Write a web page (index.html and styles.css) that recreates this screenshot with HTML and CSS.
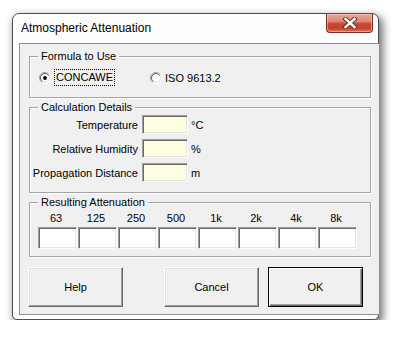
FILE: index.html
```html
<!DOCTYPE html>
<html>
<head>
<meta charset="utf-8">
<link rel="stylesheet" href="styles.css">
</head>
<body>
<svg class="defs" width="0" height="0">
  <defs>
    <linearGradient id="ro" x1="0" y1="0" x2="1" y2="1">
      <stop offset="0" stop-color="#8a8a8a"/>
      <stop offset="0.5" stop-color="#b0b0b0"/>
      <stop offset="0.62" stop-color="#ffffff"/>
      <stop offset="1" stop-color="#ffffff"/>
    </linearGradient>
    <linearGradient id="ri" x1="0" y1="0" x2="1" y2="1">
      <stop offset="0" stop-color="#4a4a4a"/>
      <stop offset="0.5" stop-color="#6a6a6a"/>
      <stop offset="0.62" stop-color="#e3e3e3"/>
      <stop offset="1" stop-color="#e3e3e3"/>
    </linearGradient>
  </defs>
</svg>
<div class="win">
  <div class="titlebar">
    <span class="title">Atmospheric Attenuation</span>
    <div class="close">
      <svg width="16" height="12" viewBox="0 0 16 12">
        <path d="M3.5 2 L12.5 10 M12.5 2 L3.5 10" stroke="#6a3025" stroke-width="4.4" stroke-linecap="square" fill="none"/>
        <path d="M3.5 2 L12.5 10 M12.5 2 L3.5 10" stroke="#ffffff" stroke-width="2.4" stroke-linecap="square" fill="none"/>
      </svg>
    </div>
  </div>
  <div class="client">
    <fieldset class="grp g1">
      <legend>Formula to Use</legend>
      <div class="radios">
        <div class="radio">
          <svg class="rb" width="12" height="12" viewBox="0 0 12 12">
            <circle cx="6" cy="6" r="5.5" fill="#ffffff" stroke="url(#ro)" stroke-width="1"/>
            <circle cx="6" cy="6" r="4.5" fill="#ffffff" stroke="url(#ri)" stroke-width="1"/>
            <circle cx="6" cy="6" r="1.9" fill="#000000"/>
          </svg>
          <span class="focus">CONCAWE</span>
        </div>
        <div class="radio r2">
          <svg class="rb" width="12" height="12" viewBox="0 0 12 12">
            <circle cx="6" cy="6" r="5.5" fill="#ffffff" stroke="url(#ro)" stroke-width="1"/>
            <circle cx="6" cy="6" r="4.5" fill="#ffffff" stroke="url(#ri)" stroke-width="1"/>
          </svg>
          <span class="rtext">ISO 9613.2</span>
        </div>
      </div>
    </fieldset>
    <fieldset class="grp g2">
      <legend>Calculation Details</legend>
      <div class="details">
        <span class="lbl">Temperature</span><span class="tb"></span><span class="unit">°C</span>
        <span class="lbl">Relative Humidity</span><span class="tb"></span><span class="unit">%</span>
        <span class="lbl">Propagation Distance</span><span class="tb"></span><span class="unit">m</span>
      </div>
    </fieldset>
    <fieldset class="grp g3">
      <legend>Resulting Attenuation</legend>
      <div class="bands">
        <span class="band">63</span><span class="band">125</span><span class="band">250</span><span class="band">500</span>
        <span class="band">1k</span><span class="band">2k</span><span class="band">4k</span><span class="band">8k</span>
        <span class="rb2"></span><span class="rb2"></span><span class="rb2"></span><span class="rb2"></span>
        <span class="rb2"></span><span class="rb2"></span><span class="rb2"></span><span class="rb2"></span>
      </div>
    </fieldset>
    <div class="buttons">
      <div class="btn help">Help</div>
      <div class="btn cancel">Cancel</div>
      <div class="btn ok">OK</div>
    </div>
  </div>
</div>
</body>
</html>
```

FILE: styles.css
```css
html, body {
  margin: 0;
  padding: 0;
  background: #ffffff;
}
body {
  font-family: "Liberation Sans", Arial, sans-serif;
  font-size: 11px;
  color: #000;
}
.defs {
  position: absolute;
  width: 0;
  height: 0;
}
.win {
  box-sizing: border-box;
  margin: 13px 0 0 12px;
  width: 367px;
  border: 1px solid #4e4e4e;
  border-radius: 7px 7px 5px 5px;
  background: #fdfdfd;
  box-shadow: 3px 4px 8px 1px rgba(0, 0, 0, 0.55);
  padding: 0 5px 4px 5px;
}
.titlebar {
  position: relative;
  height: 29px;
  display: flex;
  align-items: center;
}
.title {
  font-size: 12px;
  margin-left: 3px;
  margin-top: -1px;
}
.close {
  position: absolute;
  top: -1px;
  right: 0px;
  width: 45px;
  height: 18px;
  border: 1px solid #7a2f22;
  border-top-color: #8a3a2c;
  border-radius: 0 0 4px 4px;
  background: linear-gradient(#e9a89a 0%, #dc8a78 40%, #c9472f 55%, #c5432c 80%, #d8775c 100%);
  box-shadow: inset 0 0 0 1px rgba(255, 220, 210, 0.45);
  display: flex;
  align-items: center;
  justify-content: center;
}
.client {
  border: 1px solid #8e8e8e;
  background: #f0f0f0;
  padding: 0 8px 7px 0;
  margin: 0 0 0 1px;
  width: 351px;
}
.grp {
  margin: 3px 0 0 9px;
  padding: 0;
  border: 1px solid #a4a4a4;
  box-shadow: inset 1px 1px 0 #ffffff, 1px 1px 0 #ffffff;
  min-width: 0;
}
.g1 {
  margin-top: 6px;
}
.grp legend {
  padding: 0 3px;
  margin-left: 8px;
  line-height: 13px;
  height: 13px;
}
.radios {
  display: flex;
  align-items: center;
  height: 17px;
  margin: 6px 0 11px 9px;
}
.radio {
  display: flex;
  align-items: center;
}
.rb {
  display: block;
  flex: none;
}
.focus {
  margin-left: 3px;
  border: 1px dotted #000;
  padding: 1px;
  line-height: 13px;
}
.r2 {
  margin-left: 35px;
}
.rtext {
  margin-left: 3px;
}
.details {
  display: grid;
  grid-template-columns: 112px 46px auto;
  grid-auto-rows: 19px;
  row-gap: 5px;
  margin: 1px 0 10px 0;
  align-items: center;
}
.lbl {
  text-align: right;
  padding-right: 4px;
  white-space: nowrap;
}
.tb {
  box-sizing: border-box;
  height: 19px;
  background: #ffffe1;
  border: 1px solid;
  border-color: #a0a0a0 #ffffff #ffffff #a0a0a0;
  box-shadow: inset 1px 1px 0 #696969, inset -1px -1px 0 #e3e3e3;
}
.unit {
  padding-left: 3px;
}
.bands {
  display: grid;
  grid-template-columns: repeat(8, 39px);
  column-gap: 1px;
  grid-template-rows: 14px 22px;
  row-gap: 2px;
  margin: 2px 0 7px 8px;
}
.band {
  text-align: center;
  line-height: 14px;
  padding-right: 3px;
}
.rb2 {
  box-sizing: border-box;
  height: 22px;
  background: #ffffff;
  border: 1px solid;
  border-color: #a0a0a0 #ffffff #ffffff #a0a0a0;
  box-shadow: inset 1px 1px 0 #696969, inset -1px -1px 0 #e3e3e3;
}
.buttons {
  display: flex;
  margin: 10px 0 0 8px;
}
.btn {
  box-sizing: border-box;
  width: 95px;
  height: 40px;
  display: flex;
  align-items: center;
  justify-content: center;
  background: #f0f0f0;
  border: 1px solid;
  border-color: #ffffff #696969 #696969 #ffffff;
  box-shadow: inset -1px -1px 0 #a0a0a0, inset 1px 1px 0 #e3e3e3;
}
.cancel {
  margin-left: 41px;
}
.ok {
  margin-left: 9px;
  border-color: #000;
  box-shadow: inset 1px 1px 0 #ffffff, inset -1px -1px 0 #696969, inset -2px -2px 0 #a0a0a0;
}
```
